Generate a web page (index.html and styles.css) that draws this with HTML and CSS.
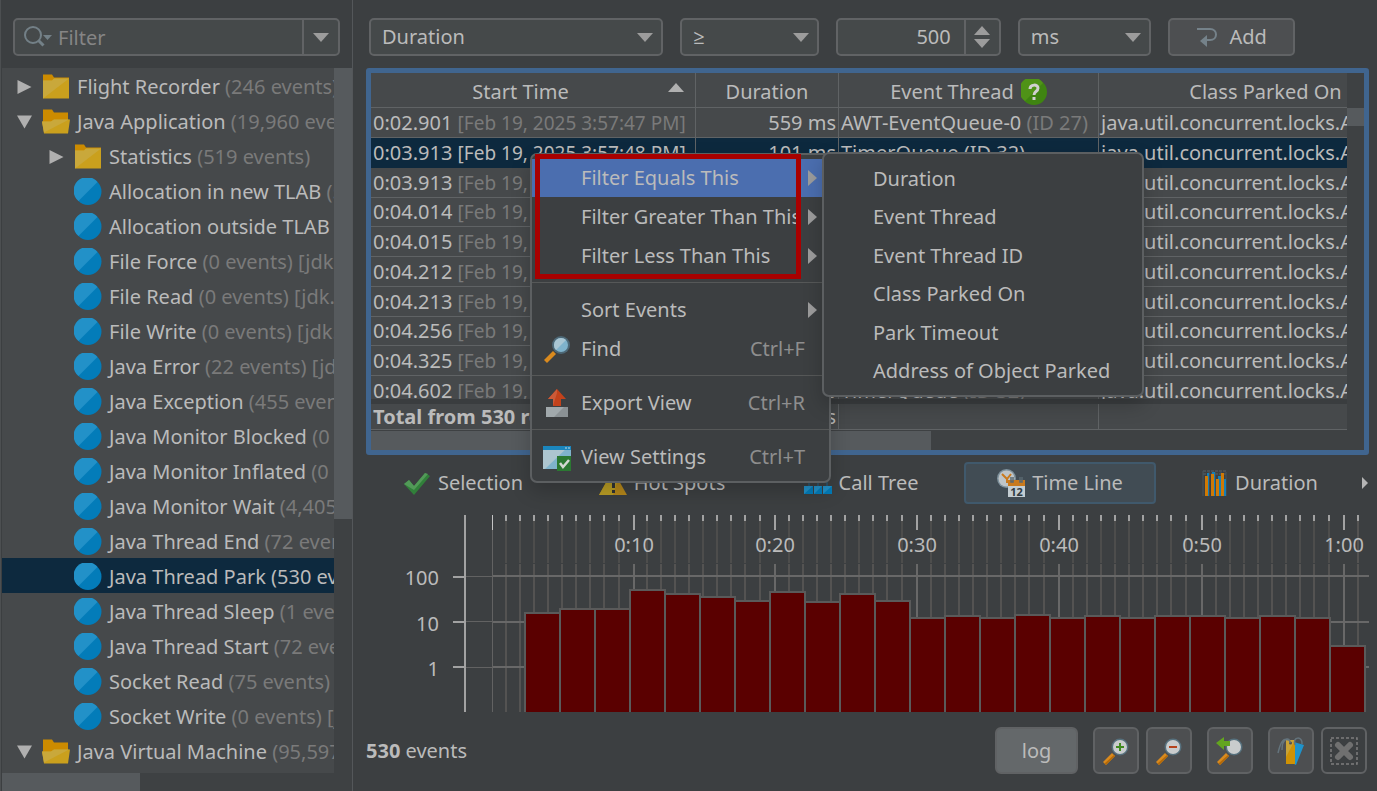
FILE: index.html
```html
<!DOCTYPE html>
<html lang="en">
<head>
<meta charset="utf-8">
<title>Flight Recorder Events</title>
<link rel="stylesheet" href="styles.css">
</head>
<body>
<svg class="defs" aria-hidden="true">
  <defs>
    <symbol id="dot" viewBox="0 0 27 27"><circle cx="13.5" cy="13.5" r="13.5" fill="#037cb9"/><path d="M23 4A13.5 13.5 0 1 0 4 23z" fill="#2291c8"/></symbol>
    <symbol id="folder" viewBox="0 0 28 24"><path d="M1 0h9l2 3h15v20H1z" fill="#cc8b00"/><path d="M1 6h9l2-2h15v20H1z" fill="#caa01d"/><path d="M1 6h9l2-2h15L1 24z" fill="#c9a83b"/></symbol>
    <symbol id="folder-open" viewBox="0 0 28 24"><path d="M1 0h9l2 3h14v12H1z" fill="#cc8b00"/><path d="M0 12h9l3-2h16l-2 14H2z" fill="#caa01d"/><path d="M0 12h9l3-2h15L2 23z" fill="#c9a83b"/></symbol>
    <symbol id="right" viewBox="0 0 14 14"><path d="M0 0l14 7-14 7z" fill="#b0b0b0"/></symbol>
    <symbol id="down" viewBox="0 0 16 14"><path d="M0 0h16l-8 14z" fill="#b0b0b0"/></symbol>
    <symbol id="caret" viewBox="0 0 16 9"><path d="M0 0h16l-8 9z" fill="#9c9c9c"/></symbol>
    <symbol id="sub" viewBox="0 0 9 16"><path d="M0 0l9 8-9 8z" fill="#9c9c9c"/></symbol>
    <symbol id="lens" viewBox="0 0 28 28"><path d="M10 16l3 3-9 9-3-3z" fill="#d98a1e"/><path d="M12 18l1 1-9 9-1.500-1.500z" fill="#b56a08"/><circle cx="18" cy="10" r="8.500" fill="#56707d"/><circle cx="18" cy="10" r="7" fill="#c9cccd"/></symbol>
  </defs>
</svg>
<div class="app">
  <aside class="sidebar">
    <div class="search">
      <svg class="search-icon" viewBox="0 0 28 22"><circle cx="9" cy="9" r="8" fill="none" stroke="#738087" stroke-width="2"/><path d="M14.500 14.500l5 5" stroke="#738087" stroke-width="3"/><path d="M19 9h9l-4.500 5z" fill="#738087"/></svg>
      <input type="text" placeholder="Filter" aria-label="Filter">
      <button type="button" aria-label="Filter history"><svg class="caret"><use href="#caret"/></svg></button>
    </div>
    <div class="tree-area">
      <ul class="tree">
        <li><svg class="tw"><use href="#right"/></svg><svg class="ic"><use href="#folder"/></svg><span>Flight Recorder <i>(246 events)</i></span></li>
        <li><svg class="tw"><use href="#down"/></svg><svg class="ic"><use href="#folder-open"/></svg><span>Java Application <i>(19,960 events)</i></span></li>
        <li class="child"><svg class="tw"><use href="#right"/></svg><svg class="ic"><use href="#folder"/></svg><span>Statistics <i>(519 events)</i></span></li>
        <li class="leaf"><svg class="ic"><use href="#dot"/></svg><span>Allocation in new TLAB <i>(5,431 events)</i></span></li>
        <li class="leaf"><svg class="ic"><use href="#dot"/></svg><span>Allocation outside TLAB <i>(1,210 events)</i></span></li>
        <li class="leaf"><svg class="ic"><use href="#dot"/></svg><span>File Force <i>(0 events) [jdk.FileForce]</i></span></li>
        <li class="leaf"><svg class="ic"><use href="#dot"/></svg><span>File Read <i>(0 events) [jdk.FileRead]</i></span></li>
        <li class="leaf"><svg class="ic"><use href="#dot"/></svg><span>File Write <i>(0 events) [jdk.FileWrite]</i></span></li>
        <li class="leaf"><svg class="ic"><use href="#dot"/></svg><span>Java Error <i>(22 events) [jdk.JavaErrorThrow]</i></span></li>
        <li class="leaf"><svg class="ic"><use href="#dot"/></svg><span>Java Exception <i>(455 events)</i></span></li>
        <li class="leaf"><svg class="ic"><use href="#dot"/></svg><span>Java Monitor Blocked <i>(0 events)</i></span></li>
        <li class="leaf"><svg class="ic"><use href="#dot"/></svg><span>Java Monitor Inflated <i>(0 events)</i></span></li>
        <li class="leaf"><svg class="ic"><use href="#dot"/></svg><span>Java Monitor Wait <i>(4,405 events)</i></span></li>
        <li class="leaf"><svg class="ic"><use href="#dot"/></svg><span>Java Thread End <i>(72 events)</i></span></li>
        <li class="leaf selected"><svg class="ic"><use href="#dot"/></svg><span>Java Thread Park <i>(530 events)</i></span></li>
        <li class="leaf"><svg class="ic"><use href="#dot"/></svg><span>Java Thread Sleep <i>(1 events)</i></span></li>
        <li class="leaf"><svg class="ic"><use href="#dot"/></svg><span>Java Thread Start <i>(72 events)</i></span></li>
        <li class="leaf"><svg class="ic"><use href="#dot"/></svg><span>Socket Read <i>(75 events)</i></span></li>
        <li class="leaf"><svg class="ic"><use href="#dot"/></svg><span>Socket Write <i>(0 events) [jdk.SocketWrite]</i></span></li>
        <li><svg class="tw"><use href="#down"/></svg><svg class="ic"><use href="#folder-open"/></svg><span>Java Virtual Machine <i>(95,597 events)</i></span></li>
      </ul>
      <div class="vbar"><div class="thumb tree-vthumb"></div></div>
      <div class="hbar"><div class="thumb tree-hthumb"></div></div>
    </div>
  </aside>

  <main class="main">
    <form class="filters">
      <span class="pick w-field"><select aria-label="Column"><option>Duration</option></select><svg class="caret"><use href="#caret"/></svg></span>
      <span class="pick w-op"><select aria-label="Operator"><option>≥</option></select><svg class="caret"><use href="#caret"/></svg></span>
      <span class="spinner"><input type="text" value="500" aria-label="Value"><button type="button" aria-label="Step value"><svg viewBox="0 0 16 22"><path d="M0 9l8-9 8 9zM0 13h16l-8 9z" fill="#9c9c9c"/></svg></button></span>
      <span class="pick w-unit"><select aria-label="Unit"><option>ms</option></select><svg class="caret"><use href="#caret"/></svg></span>
      <button type="button" class="add"><svg viewBox="0 0 22 20"><path d="M1 2h13c8 0 8 11 0 11h-5" fill="none" stroke="#75828a" stroke-width="2"/><path d="M4 14l7-6v12z" fill="#75828a"/></svg>Add</button>
    </form>

    <section class="grid-frame">
      <div class="rows">
        <table>
          <colgroup><col class="c1"><col class="c2"><col class="c3"><col class="c4"></colgroup>
          <thead><tr><th><div class="sorted">Start Time<svg viewBox="0 0 16 9"><path d="M0 9l8-9 8 9z" fill="#b0b0b0"/></svg></div></th><th>Duration</th><th><div class="helped">Event Thread<svg viewBox="0 0 26 26"><circle cx="13" cy="13" r="13" fill="#3f8411"/><path d="M22 4A13 13 0 1 0 4 22z" fill="#4f9317"/><path d="M9 10c0-5 8-5 8-1 0 4-4 3-4 7" fill="none" stroke="#d0d0d0" stroke-width="3"/><path d="M11.500 18h3v3h-3z" fill="#d0d0d0"/></svg></div></th><th>Class Parked On</th></tr></thead>
          <tbody>
            <tr><td>0:02.901 <i>[Feb 19, 2025 3:57:47 PM]</i></td><td class="num">559 ms</td><td>AWT-EventQueue-0 <i>(ID 27)</i></td><td>java.util.concurrent.locks.AbstractQueue</td></tr>
            <tr class="selected"><td>0:03.913 <i>[Feb 19, 2025 3:57:48 PM]</i></td><td class="num">101 ms</td><td>TimerQueue <i>(ID 32)</i></td><td>java.util.concurrent.locks.AbstractQueue</td></tr>
            <tr><td>0:03.913 <i>[Feb 19, 2025 3:57:48 PM]</i></td><td class="num">101 ms</td><td>TimerQueue <i>(ID 32)</i></td><td>java.util.concurrent.locks.AbstractQueue</td></tr>
            <tr><td>0:04.014 <i>[Feb 19, 2025 3:57:48 PM]</i></td><td class="num">101 ms</td><td>TimerQueue <i>(ID 32)</i></td><td>java.util.concurrent.locks.AbstractQueue</td></tr>
            <tr><td>0:04.015 <i>[Feb 19, 2025 3:57:48 PM]</i></td><td class="num">101 ms</td><td>TimerQueue <i>(ID 32)</i></td><td>java.util.concurrent.locks.AbstractQueue</td></tr>
            <tr><td>0:04.212 <i>[Feb 19, 2025 3:57:48 PM]</i></td><td class="num">101 ms</td><td>TimerQueue <i>(ID 32)</i></td><td>java.util.concurrent.locks.AbstractQueue</td></tr>
            <tr><td>0:04.213 <i>[Feb 19, 2025 3:57:48 PM]</i></td><td class="num">101 ms</td><td>TimerQueue <i>(ID 32)</i></td><td>java.util.concurrent.locks.AbstractQueue</td></tr>
            <tr><td>0:04.256 <i>[Feb 19, 2025 3:57:48 PM]</i></td><td class="num">101 ms</td><td>TimerQueue <i>(ID 32)</i></td><td>java.util.concurrent.locks.AbstractQueue</td></tr>
            <tr><td>0:04.325 <i>[Feb 19, 2025 3:57:48 PM]</i></td><td class="num">101 ms</td><td>TimerQueue <i>(ID 32)</i></td><td>java.util.concurrent.locks.AbstractQueue</td></tr>
            <tr><td>0:04.602 <i>[Feb 19, 2025 3:57:48 PM]</i></td><td class="num">101 ms</td><td>TimerQueue <i>(ID 32)</i></td><td>java.util.concurrent.locks.AbstractQueue</td></tr>
          </tbody>
        </table>
      </div>
      <div class="totals">
        <table>
          <colgroup><col class="c1"><col class="c2"><col class="c3"><col class="c4"></colgroup>
          <tbody><tr><td><b>Total from 530 rows</b></td><td class="num">s</td><td></td><td></td></tr></tbody>
        </table>
      </div>
      <div class="hbar"><div class="thumb grid-hthumb"></div></div>
      <div class="vbar"><div class="thumb grid-vthumb"></div></div>
    </section>

    <nav class="tabs">
      <button type="button"><svg viewBox="0 0 28 28"><path d="M1 15l5-4 5 6L22 4l5 3-16 19z" fill="#31803a"/><path d="M1 15l5-4 5 6L22 4l3 1-14 16z" fill="#529a58"/></svg>Selection</button>
      <button type="button"><svg viewBox="0 0 28 28"><path d="M14 1l14 25H0z" fill="#b5871b"/><path d="M14 1L0 26h14l5-16z" fill="#b99d25"/><path d="M13 9h3v10h-3zM13 21h3v3h-3z" fill="#303336"/></svg>Hot Spots</button>
      <button type="button"><svg viewBox="0 0 28 28"><path d="M14 6v7M5 18v-5h18v5M14 13v5" fill="none" stroke="#2f5164" stroke-width="2"/><path d="M0 17h9v8H0zM10 17h8v8h-8zM19 17h9v8h-9z" fill="#037cb9"/><path d="M0 17h9l-9 8zM10 17h8l-8 8zM19 17h9l-9 8z" fill="#2291c8"/></svg>Call Tree</button>
      <button type="button" class="active"><svg viewBox="0 0 28 28"><circle cx="9.500" cy="9.500" r="9.500" fill="#7e919c"/><circle cx="9.500" cy="9.500" r="8" fill="#bfc5c8"/><path d="M5 5l5 5 4-5M10 10v4" stroke="#ca7a1d" stroke-width="2" fill="none"/><path d="M11 11h17v17H11z" fill="#c3cdd2"/><path d="M11 11h17v6H11z" fill="#c97a1d"/><path d="M14 8v5h2V8M23 8v5h2V8" fill="none" stroke="#5a6870" stroke-width="1.500"/><text x="19.500" y="27" text-anchor="middle" class="cal">12</text></svg>Time Line</button>
      <button type="button"><svg viewBox="0 0 28 28"><path d="M3 2h23M3 5h23" stroke="#56636b" stroke-width="1" stroke-dasharray="3 1"/><path d="M3 2v25M9 3v24M15 3v24M21 3v24M26 3v24" stroke="#46565f"/><path d="M7 4h2v23H7zM12 3h3v24h-3zM18 7h3v20h-3zM23 10h3v17h-3z" fill="#167fb5"/><path d="M5 7h3v20H5zM11 5h3v22h-3zM16 10h3v17h-3zM21 4h3v23h-3z" fill="#cf7905"/></svg>Duration</button>
      <svg class="more" viewBox="0 0 6 12"><path d="M0 0l6 6-6 6z" fill="#b5b5b5"/></svg>
    </nav>

    <svg class="chart" viewBox="0 0 1003 197" role="img" aria-label="Events over time">
      <defs>
        <g id="minor"><path d="M14 0v48M28 0v48M42 0v48M56 0v48M70 0v48M84 0v48M98 0v48M112 0v48M127 0v48" stroke="#4d4d4c" stroke-width="2"/><path d="M14 49v148M28 49v148M42 49v148M56 49v148M70 49v148M84 49v148M98 49v148M112 49v148M127 49v148" stroke="#545352" stroke-width="2"/><path d="M14 0v6M28 0v6M42 0v6M56 0v6M70 0v6M84 0v6M98 0v6M112 0v6M127 0v6" stroke="#a2a2a2" stroke-width="2"/></g>
      </defs>
      <use href="#minor" x="126"/><use href="#minor" x="267"/><use href="#minor" x="409"/><use href="#minor" x="551"/><use href="#minor" x="693"/><use href="#minor" x="836"/>
      <path d="M992 0v48M992 49v148" stroke="#545352" stroke-width="2"/><path d="M992 0v6" stroke="#a2a2a2" stroke-width="2"/>
      <path d="M268 49v148M409 49v148M551 49v148M693 49v148M836 49v148M978 49v148M126 61h877M126 107h877M126 152h877" stroke="#686868" stroke-width="2"/>
      <path d="M99 61.500h27M99 106.500h27M99 152.500h27M126.500 15v182" stroke="#626262" stroke-width="1"/>
      <path d="M268 0v15M409 0v15M551 0v15M693 0v15M836 0v15M978 0v15M99 0v197M87 62h12M87 107h12M87 152h12" stroke="#a2a2a2" stroke-width="2"/>
      <path d="M126.500 0v15" stroke="#c4c4c4"/>
      <g fill="#5a0000" stroke="#5a5a5a" stroke-width="2">
        <rect x="159" y="98" width="35" height="120"/><rect x="194" y="94" width="35" height="120"/><rect x="229" y="94" width="35" height="120"/><rect x="334" y="82" width="35" height="140"/><rect x="299" y="79" width="35" height="140"/><rect x="264" y="75" width="35" height="140"/><rect x="369" y="86" width="35" height="140"/><rect x="439" y="87" width="35" height="140"/><rect x="404" y="77" width="35" height="140"/><rect x="509" y="86" width="35" height="140"/><rect x="474" y="79" width="35" height="140"/><rect x="544" y="103" width="35" height="120"/><rect x="614" y="103" width="35" height="120"/><rect x="579" y="101" width="35" height="120"/><rect x="684" y="103" width="35" height="120"/><rect x="649" y="100" width="35" height="120"/><rect x="754" y="103" width="35" height="120"/><rect x="719" y="101" width="35" height="120"/><rect x="789" y="101" width="35" height="120"/><rect x="859" y="103" width="35" height="120"/><rect x="824" y="101" width="35" height="120"/><rect x="929" y="103" width="35" height="120"/><rect x="894" y="101" width="35" height="120"/><rect x="964" y="131" width="35" height="120"/>
        <path d="M544 90v120M964 110v100" fill="none"/>
      </g>
      <g class="xlab"><text x="268" y="37">0:10</text><text x="409" y="37">0:20</text><text x="551" y="37">0:30</text><text x="693" y="37">0:40</text><text x="836" y="37">0:50</text><text x="978" y="37">1:00</text></g>
      <g class="ylab"><text x="73" y="70">100</text><text x="73" y="116">10</text><text x="73" y="161">1</text></g>
    </svg>

    <footer class="status">
      <span class="count"><b>530</b> events</span>
      <button type="button" class="log">log</button>
      <span class="pair">
        <button type="button" aria-label="Zoom in"><svg viewBox="0 0 28 28"><use href="#lens" width="28" height="28"/><path d="M18 6v8M14 10h8" stroke="#3f8a1f" stroke-width="2"/></svg></button>
        <button type="button" aria-label="Zoom out"><svg viewBox="0 0 28 28"><use href="#lens" width="28" height="28"/><path d="M14 10h8" stroke="#b5431d" stroke-width="2"/></svg></button>
      </span>
      <button type="button" aria-label="Fit"><svg viewBox="0 0 28 28"><use href="#lens" width="28" height="28"/><path d="M0 6l8-6v4h6v5H8v4z" fill="#63a51f"/></svg></button>
      <span class="pair">
        <button type="button" aria-label="Bookmarks"><svg viewBox="0 0 28 28"><path d="M17 5l10 3-8 20-8-4z" fill="#1f93cb"/><path d="M9 3h9v24H9z" fill="#cf9205"/><path d="M9 3h9L9 20z" fill="#c9a336"/><circle cx="13.500" cy="6" r="1.500" fill="#4d4f51"/><path d="M13 6c0-7-8-5-8 7M12 3C5 0 3 8 1 16M18 8c-3-9 8-9 7-1" fill="none" stroke="#64747d" stroke-width="1.500"/></svg></button>
        <button type="button" class="off" aria-label="Clear bookmarks" disabled><svg viewBox="0 0 28 28"><path d="M1 1h26v26H1z" fill="none" stroke="#7d7d7d" stroke-width="1.500" stroke-dasharray="3 2"/><path d="M8 8l12 12M20 8L8 20" stroke="#707070" stroke-width="6" stroke-linecap="round"/></svg></button>
      </span>
    </footer>
  </main>

  <div class="menu context" role="menu">
    <button type="button" role="menuitem" class="hot"><span class="mi"></span>Filter Equals This<svg class="sub"><use href="#sub"/></svg></button>
    <button type="button" role="menuitem"><span class="mi"></span>Filter Greater Than This<svg class="sub"><use href="#sub"/></svg></button>
    <button type="button" role="menuitem"><span class="mi"></span>Filter Less Than This<svg class="sub"><use href="#sub"/></svg></button>
    <hr>
    <button type="button" role="menuitem"><span class="mi"></span>Sort Events<svg class="sub"><use href="#sub"/></svg></button>
    <button type="button" role="menuitem"><span class="mi"><svg viewBox="0 0 28 28"><path d="M10 16l3 3-9 9-3-3z" fill="#d98a1e"/><circle cx="18" cy="10" r="9" fill="#4d6876"/><circle cx="18" cy="10" r="7" fill="#7fb3cc"/><path d="M23 5A7 7 0 1 0 13 15z" fill="#a9c6d3"/></svg></span>Find<kbd>Ctrl+F</kbd></button>
    <hr>
    <button type="button" role="menuitem"><span class="mi"><svg viewBox="0 0 28 28"><path d="M14 0l9 10h-5v7h-8v-7H5z" fill="#c2421b"/><path d="M14 0v4l-4 13v-7H5z" fill="#cc5a38"/><path d="M3 18h22v10H3z" fill="#8a9194"/><path d="M3 18h18L11 28H3z" fill="#a1a9ac"/></svg></span>Export View<kbd>Ctrl+R</kbd></button>
    <hr>
    <button type="button" role="menuitem"><span class="mi"><svg viewBox="0 0 28 28"><path d="M0 3h28v23H0z" fill="#7fb3cc"/><path d="M0 3h26L2 26H0z" fill="#adc5cf"/><path d="M0 3h28v4H0z" fill="#1b86bd"/><path d="M22 5h2M25 5h2" stroke="#c4d8e0"/><path d="M14 13h14v15H14z" fill="#2b7832"/><path d="M17 20l3 4 6-7" fill="none" stroke="#d2d8d2" stroke-width="2.500"/></svg></span>View Settings<kbd>Ctrl+T</kbd></button>
  </div>

  <div class="menu submenu" role="menu">
    <button type="button" role="menuitem">Duration</button>
    <button type="button" role="menuitem">Event Thread</button>
    <button type="button" role="menuitem">Event Thread ID</button>
    <button type="button" role="menuitem">Class Parked On</button>
    <button type="button" role="menuitem">Park Timeout</button>
    <button type="button" role="menuitem">Address of Object Parked</button>
  </div>
  <div class="callout"></div>
</div>
</body>
</html>
```
FILE: styles.css
```css
* { box-sizing: border-box; }
body {
  margin: 0;
  background: #3c3f41;
  color: #bbbbbb;
  font: 20px/30px "Noto Sans", "Open Sans", sans-serif;
}
button, input, select { font: inherit; color: inherit; margin: 0; }
i { font-style: normal; color: #7a7a7a; }
svg { display: block; flex: none; }
.defs { position: absolute; width: 0; height: 0; }

.app {
  position: relative;
  display: grid;
  grid-template-columns: 353px minmax(0, 1fr);
  height: 100vh;
  overflow: hidden;
}

/* Sidebar */
.sidebar {
  display: flex;
  flex-direction: column;
  min-height: 0;
  padding-left: 1px;
  border-left: 1px solid #4c4f51;
  border-right: 1px solid #54575a;
}
.search {
  display: flex;
  align-items: center;
  height: 38px;
  margin: 18px 12px 12px 11px;
  padding-left: 9px;
  border: 2px solid #616365;
  border-radius: 5px;
  background: #45494a;
}
.search-icon { width: 28px; height: 22px; }
.search input {
  flex: 1;
  min-width: 0;
  height: 34px;
  padding: 0 6px;
  border: 0;
  background: none;
}
.search input::placeholder { color: #858585; opacity: 1; }
.search button {
  display: grid;
  place-items: center;
  width: 36px;
  height: 34px;
  padding: 0;
  border: 0;
  border-left: 2px solid #616365;
  background: none;
}
.caret { width: 16px; height: 9px; }
.tree-area {
  flex: 1;
  min-height: 0;
  display: grid;
  grid-template: minmax(0, 1fr) 18px / minmax(0, 1fr) 18px;
}
.tree {
  margin: 0;
  padding: 0;
  list-style: none;
  overflow: hidden;
  background: #46494b;
}
.tree li {
  display: flex;
  align-items: center;
  height: 35px;
  padding-top: 2px;
  padding-left: 15px;
  white-space: nowrap;
}
.tree .child { padding-left: 47px; }
.tree .leaf { padding-left: 72px; }
.tree span { padding-top: 1px; }
.tw { width: 15px; height: 14px; margin-right: 10px; }
.ic { width: 28px; height: 27px; margin-right: 7px; }
.tree .selected { background: #0d293e; }
.selected i { color: inherit; }
.vbar, .hbar { background: #3e4143; }
.thumb { background: #565a5d; }
.tree-vthumb { height: 64%; }
.tree-area .hbar { grid-column: 1 / -1; }
.tree-hthumb { width: 138px; height: 100%; }

/* Main column */
.main {
  display: flex;
  flex-direction: column;
  min-width: 0;
  padding: 18px 8px 17px 13px;
}
.filters {
  display: flex;
  gap: 17px;
  padding: 0 74px 0 3px;
  margin-bottom: 12px;
}
.pick { display: grid; align-items: center; }
.pick > * { grid-area: 1 / 1; }
.pick .caret { justify-self: end; margin-right: 10px; pointer-events: none; }
.pick select, .spinner, .add {
  width: 100%;
  height: 38px;
  padding: 0 11px;
  border: 2px solid #616365;
  border-radius: 5px;
  background: #45494a;
  appearance: none;
}
.w-field { flex: 1 1 295px; }
.w-op { width: 139px; }
.w-unit { width: 134px; }
.spinner { display: flex; width: 165px; padding: 0; }
.spinner input {
  flex: 1;
  min-width: 0;
  padding: 0 13px;
  border: 0;
  background: none;
  text-align: right;
}
.spinner button {
  display: grid;
  place-items: center;
  width: 35px;
  padding: 0;
  border: 0;
  border-left: 2px solid #616365;
  background: none;
}
.spinner svg { width: 16px; height: 22px; }
.add {
  display: flex;
  align-items: center;
  justify-content: center;
  gap: 11px;
  width: 127px;
  background: #4d4f51;
}
.add svg { width: 22px; height: 20px; }

/* Event table */
.grid-frame {
  display: grid;
  grid-template: 326px 32px 19px / minmax(0, 1fr) 17px;
  border: 5px solid #40658f;
  border-radius: 3px;
  background: #3e4143;
}
.rows, .totals { overflow: hidden; background: #46494b; }
.totals { border-top: 5px solid #3a3d3f; border-bottom: 1px solid #3e4143; }
.grid-frame .hbar { grid-area: 3 / 1; }
.grid-frame .vbar { grid-area: 1 / 2 / 4 / 3; padding-top: 35px; }
.grid-hthumb { width: 560px; height: 100%; }
.grid-vthumb { height: 18px; }
table {
  width: 1062px;
  table-layout: fixed;
  border-collapse: separate;
  border-spacing: 0;
}
.c1 { width: 325px; }
.c2 { width: 143px; }
.c3 { width: 260px; }
.c4 { width: 334px; }
th, td {
  height: 30px;
  padding: 0 2px;
  border-right: 1px solid #606365;
  border-bottom: 1px solid #606365;
  line-height: 28px;
  font-weight: 400;
  text-align: left;
  white-space: nowrap;
  overflow: hidden;
}
th { height: 35px; padding-top: 3px; text-align: center; }
.rows tbody tr:nth-child(4n) td { height: 29px; }
.rows td:first-child i { font-size: 19px; }
.num { text-align: right; }
tr.selected { background: #0d293e; }
tr.selected td { border-bottom-color: #0d293e; }
.totals td { height: 26px; line-height: 25px; }
.sorted {
  display: grid;
  grid-template-columns: 1fr 25px;
}
.sorted svg { width: 16px; height: 9px; margin-top: 5px; }
.helped {
  display: flex;
  align-items: center;
  justify-content: center;
  gap: 7px;
}
.helped svg { width: 26px; height: 26px; }

/* View tabs */
.tabs {
  display: grid;
  grid-template-columns: repeat(5, minmax(0, 1fr)) 6px;
  gap: 7px;
  align-items: center;
  margin: 7px 1px 11px 1px;
}
.tabs button {
  display: flex;
  align-items: center;
  justify-content: center;
  gap: 7px;
  height: 42px;
  padding: 0;
  border: 2px solid transparent;
  border-radius: 4px;
  background: none;
}
.tabs button svg { width: 28px; height: 28px; }
.tabs .active { background: #414c54; border-color: #40596c; }
.cal { font: 700 11px "Noto Sans", sans-serif; fill: #303b42; }
.more { width: 6px; height: 12px; }

/* Chart */
.chart { width: 100%; overflow: hidden; }
.chart text { fill: #bbbbbb; font-size: 20px; }
.xlab { text-anchor: middle; }
.ylab { text-anchor: end; }

/* Status bar */
.status {
  display: flex;
  align-items: center;
  gap: 15px;
  margin-top: 15px;
  padding-right: 2px;
}
.count { flex: 1; }
.pair { display: flex; gap: 7px; }
.status button {
  display: grid;
  place-items: center;
  width: 46px;
  height: 47px;
  padding: 0;
  border: 2px solid #606264;
  border-radius: 6px;
  background: #4d4f51;
}
.status button svg { width: 28px; height: 28px; }
.status .log { width: 83px; background: #64686a; }
.status .off { background: none; }

/* Menus */
.menu {
  position: absolute;
  border: 2px solid #5c5f61;
  border-radius: 7px;
  background: #3c3f41;
  box-shadow: 0 8px 20px rgba(0, 0, 0, .2);
}
.context { left: 530px; top: 153px; width: 301px; padding: 4px 0 5px; }
.submenu { left: 822px; top: 152px; width: 322px; padding: 5px 0; }
.menu button {
  display: flex;
  align-items: center;
  width: 100%;
  height: 39px;
  padding: 0 24px 0 11px;
  border: 0;
  background: none;
  text-align: left;
  white-space: nowrap;
}
.submenu button { padding-left: 49px; }
.submenu button:nth-child(even) { height: 38px; }
.menu .hot { background: #4b6eaf; height: 38px; }
.menu hr {
  height: 1px;
  margin: 7px 0;
  border: 0;
  background: #565858;
}
.mi { width: 28px; margin-right: 10px; flex: none; }
.mi svg { width: 28px; height: 28px; }
.menu .sub { width: 9px; height: 16px; margin: 0 -12px 0 auto; }
kbd { margin-left: auto; font: inherit; color: #8e8e8e; }
.callout {
  position: absolute;
  left: 535px;
  top: 154px;
  width: 266px;
  height: 125px;
  border: 5px solid #a80000;
}
```
